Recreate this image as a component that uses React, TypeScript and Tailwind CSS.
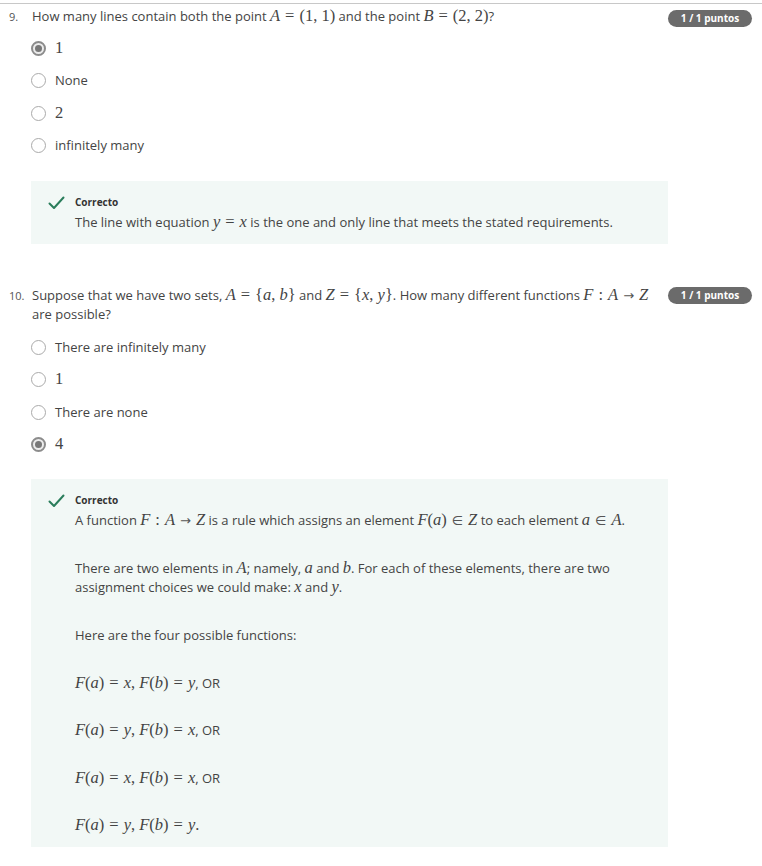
import React from "react";

const sans = "font-['Open_Sans',_'Liberation_Sans',_sans-serif]";
const serif = "font-['Liberation_Serif',_'DejaVu_Serif',_serif]";

function M({ children }: { children: React.ReactNode }) {
    return <span className={`${serif} text-[16.5px] leading-none text-[#444] whitespace-nowrap`}>{children}</span>;
}

function V({ children }: { children: React.ReactNode }) {
    return <span className="italic">{children}</span>;
}

function Op({ children }: { children: React.ReactNode }) {
    return <span className="mx-[5px]">{children}</span>;
}

function Arrow() {
    return <span className="mx-[5px] font-['DejaVu_Sans',_sans-serif] text-[13px] text-[#555]">→</span>;
}

function In() {
    return <span className="mx-[5px] text-[13px] text-[#555] font-['DejaVu_Sans',_sans-serif]">∈</span>;
}

function Badge() {
    return (
        <div className="shrink-0 w-[84px] h-[17px] rounded-full bg-[#6b6b6b] flex items-center justify-center text-white text-[10px] font-bold font-['Open_Sans',_sans-serif]">
            1 / 1 puntos
        </div>
    );
}

function Radio({ checked, children }: { checked?: boolean; children: React.ReactNode }) {
    return (
        <div className="h-[32.5px] flex items-center">
            {checked ? (
                <div className="w-[15px] h-[15px] rounded-full border-2 border-[#8c8c8c] bg-[#ececec] flex items-center justify-center">
                    <div className="w-[7px] h-[7px] rounded-full bg-[#787878]"></div>
                </div>
            ) : (
                <div className="w-[15px] h-[15px] rounded-full border border-[#aaa] bg-white"></div>
            )}
            <div className="ml-[9px] text-[13px] text-[#444]">{children}</div>
        </div>
    );
}

function Check() {
    return (
        <svg width="17" height="14" viewBox="0 0 17 14" className="shrink-0 mt-[2px]">
            <path d="M1.5 7.5 L6 12 L15.5 1.5" fill="none" stroke="#2a7d5b" strokeWidth="2" strokeLinecap="round" strokeLinejoin="round" />
        </svg>
    );
}

function Feedback({ children }: { children: React.ReactNode }) {
    return (
        <div className="ml-[31px] w-[637px] bg-[#f2f8f6] pl-[17px] pr-4 pt-[13px] pb-[12px] flex gap-[10px]">
            <Check />
            <div className="flex-1">
                <div className="text-[10px] font-bold text-[#333] leading-[16px]">Correcto</div>
                <div className="mt-[3px] text-[13px] text-[#444] leading-[19px]">{children}</div>
            </div>
        </div>
    );
}

export default function App() {
    return (
        <div className={`${sans} bg-white w-[762px] min-h-[866px] pt-[3px] overflow-hidden`}>
            <div className="border-t border-[#c8c8c8]">
                {/* question 9 */}
                <div className="flex items-start pt-[3px] pr-[10px]">
                    <div className="w-[32px] pl-[9px] text-[11px] text-[#555] leading-[19px] shrink-0">9.</div>
                    <div className="flex-1 text-[13px] text-[#444] leading-[19px]">
                        How many lines contain both the point{" "}
                        <M>
                            <V>A</V>
                            <Op>=</Op>(1, 1)
                        </M>{" "}
                        and the point{" "}
                        <M>
                            <V>B</V>
                            <Op>=</Op>(2, 2)
                        </M>
                        ?
                    </div>
                    <div className="mt-[3px] ml-2">
                        <Badge />
                    </div>
                </div>
                <div className="pl-[31px] mt-[5px]">
                    <Radio checked>
                        <M>1</M>
                    </Radio>
                    <Radio>None</Radio>
                    <Radio>
                        <M>2</M>
                    </Radio>
                    <Radio>infinitely many</Radio>
                </div>
                <div className="mt-[19px]">
                    <Feedback>
                        The line with equation{" "}
                        <M>
                            <V>y</V>
                            <Op>=</Op>
                            <V>x</V>
                        </M>{" "}
                        is the one and only line that meets the stated requirements.
                    </Feedback>
                </div>

                {/* question 10 */}
                <div className="flex items-start mt-[42px] pr-[10px]">
                    <div className="w-[32px] pl-[9px] text-[11px] text-[#555] leading-[19px] shrink-0">10.</div>
                    <div className="flex-1 text-[13px] text-[#444] leading-[19px]">
                        Suppose that we have two sets,{" "}
                        <M>
                            <V>A</V>
                            <Op>=</Op>
                            {"{"}
                            <V>a</V>, <V>b</V>
                            {"}"}
                        </M>{" "}
                        and{" "}
                        <M>
                            <V>Z</V>
                            <Op>=</Op>
                            {"{"}
                            <V>x</V>, <V>y</V>
                            {"}"}
                        </M>
                        . How many different functions{" "}
                        <M>
                            <V>F</V>
                            <Op>:</Op>
                            <V>A</V>
                            <Arrow />
                            <V>Z</V>
                        </M>{" "}
                        are possible?
                    </div>
                    <div className="mt-[1px] ml-2">
                        <Badge />
                    </div>
                </div>
                <div className="pl-[31px] mt-[7px]">
                    <Radio>There are infinitely many</Radio>
                    <Radio>
                        <M>1</M>
                    </Radio>
                    <Radio>There are none</Radio>
                    <Radio checked>
                        <M>4</M>
                    </Radio>
                </div>
                <div className="mt-[18px]">
                    <Feedback>
                        <p>
                            A function{" "}
                            <M>
                                <V>F</V>
                                <Op>:</Op>
                                <V>A</V>
                                <Arrow />
                                <V>Z</V>
                            </M>{" "}
                            is a rule which assigns an element{" "}
                            <M>
                                <V>F</V>(<V>a</V>)<In />
                                <V>Z</V>
                            </M>{" "}
                            to each element{" "}
                            <M>
                                <V>a</V>
                                <In />
                                <V>A</V>
                            </M>
                            .
                        </p>
                        <p className="mt-[29px] pr-[40px]">
                            There are two elements in{" "}
                            <M>
                                <V>A</V>
                            </M>
                            ; namely,{" "}
                            <M>
                                <V>a</V>
                            </M>{" "}
                            and{" "}
                            <M>
                                <V>b</V>
                            </M>
                            . For each of these elements, there are two assignment choices we could make:{" "}
                            <M>
                                <V>x</V>
                            </M>{" "}
                            and{" "}
                            <M>
                                <V>y</V>
                            </M>
                            .
                        </p>
                        <p className="mt-[29px]">Here are the four possible functions:</p>
                        <p className="mt-[29px]">
                            <M>
                                <V>F</V>(<V>a</V>)<Op>=</Op>
                                <V>x</V>, <V>F</V>(<V>b</V>)<Op>=</Op>
                                <V>y</V>
                            </M>
                            , OR
                        </p>
                        <p className="mt-[28px]">
                            <M>
                                <V>F</V>(<V>a</V>)<Op>=</Op>
                                <V>y</V>, <V>F</V>(<V>b</V>)<Op>=</Op>
                                <V>x</V>
                            </M>
                            , OR
                        </p>
                        <p className="mt-[29px]">
                            <M>
                                <V>F</V>(<V>a</V>)<Op>=</Op>
                                <V>x</V>, <V>F</V>(<V>b</V>)<Op>=</Op>
                                <V>x</V>
                            </M>
                            , OR
                        </p>
                        <p className="mt-[28px]">
                            <M>
                                <V>F</V>(<V>a</V>)<Op>=</Op>
                                <V>y</V>, <V>F</V>(<V>b</V>)<Op>=</Op>
                                <V>y</V>.
                            </M>
                        </p>
                    </Feedback>
                </div>
            </div>
        </div>
    );
}
